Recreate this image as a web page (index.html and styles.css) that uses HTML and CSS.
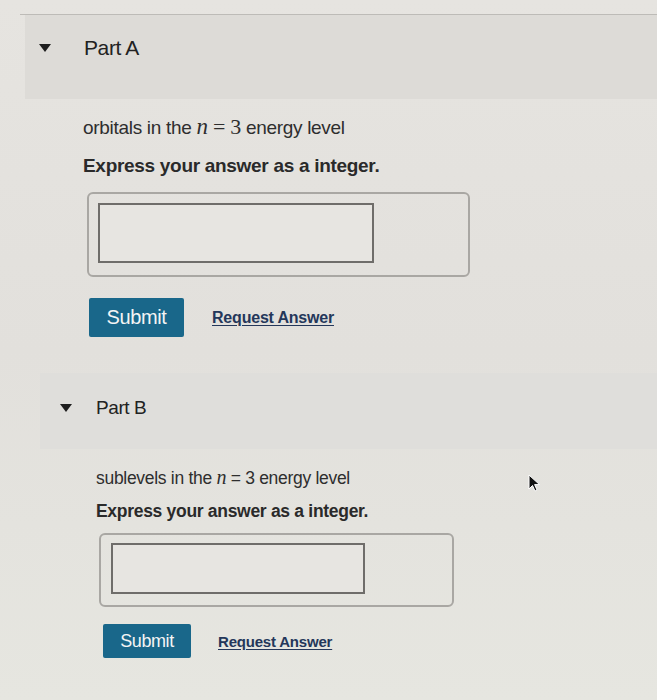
FILE: index.html
```html
<!DOCTYPE html>
<html>
<head>
<meta charset="utf-8">
<link rel="stylesheet" href="styles.css">
</head>
<body>
<div class="page">
  <section class="part part-a">
    <div class="part-head">
      <span class="tri"></span>
      <span class="part-title">Part A</span>
    </div>
    <div class="part-body">
      <p class="prompt">orbitals in the <span class="math"><i>n</i> = 3</span> energy level</p>
      <p class="instr">Express your answer as a integer.</p>
      <div class="answer-box"><div class="input"></div></div>
      <div class="actions">
        <button class="submit">Submit</button>
        <a class="req">Request Answer</a>
      </div>
    </div>
  </section>
  <section class="part part-b">
    <div class="part-head">
      <span class="tri"></span>
      <span class="part-title">Part B</span>
    </div>
    <div class="part-body">
      <p class="prompt"><span>sublevels in the </span><i class="nvar">n</i> = 3 energy level</p>
      <p class="instr">Express your answer as a integer.</p>
      <div class="answer-box"><div class="input"></div></div>
      <div class="actions">
        <button class="submit">Submit</button>
        <a class="req">Request Answer</a>
      </div>
    </div>
  </section>
  <svg class="cursor" width="14" height="18" viewBox="0 0 14 18"><path d="M1 1 L1 15 L4.5 11.5 L7 17 L9 16 L6.6 10.6 L11.5 10.6 Z" fill="#111" stroke="#fff" stroke-width="1"/></svg>
</div>
</body>
</html>
```
FILE: styles.css
```css
* { box-sizing: border-box; }
html, body { margin: 0; padding: 0; }
body {
  width: 657px;
  height: 700px;
  overflow: hidden;
  background: #e4e2de;
  font-family: "Liberation Sans", Arial, sans-serif;
  color: #2b2b2b;
}
.page {
  position: relative;
  padding-top: 14px;
  height: 700px;
  background: linear-gradient(180deg, #e6e4e0 0%, #e2e0dc 50%, #e6e6e0 100%);
}
.part-a {
  margin-left: 20px;
  border-top: 1px solid #bdbbb7;
}
.part-head {
  display: flex;
  align-items: center;
  background: #dddbd7;
}
.part-a .part-head {
  height: 84px;
  margin-left: 5px;
  padding-left: 14px;
  padding-bottom: 18px;
}
.tri {
  width: 0;
  height: 0;
  border-left: 6px solid transparent;
  border-right: 6px solid transparent;
  border-top: 8px solid #1e1e1e;
}
.part-title {
  font-size: 21px;
  color: #222;
  letter-spacing: -0.4px;
}
.part-a .part-title { margin-left: 33px; }
.part-body p { margin: 0; }
.part-a .part-body { padding-left: 63px; }
.prompt { font-size: 19px; color: #2e2e2e; letter-spacing: -0.3px; }
.part-a .prompt { margin-top: 15px !important; }
.math { font-family: "Liberation Serif", serif; font-size: 22px; }
.math i { font-size: 23px; }
.instr { font-weight: bold; font-size: 19px; color: #2a2a2a; letter-spacing: -0.3px; }
.part-a .instr { margin-top: 15px !important; }
.answer-box {
  border: 2px solid #a9a7a3;
  border-radius: 6px;
}
.part-a .answer-box {
  margin-top: 15px;
  margin-left: 4px;
  width: 383px;
  height: 85px;
  padding: 9px 0 0 9px;
}
.input {
  border: 2px solid #6f6d6a;
  background: #e7e5e1;
}
.part-a .input { width: 276px; height: 60px; }
.actions { display: flex; align-items: center; }
.part-a .actions { margin-top: 21px; margin-left: 6px; }
.submit {
  border: none;
  background: #19678a;
  color: #f4f4f4;
  font-family: "Liberation Sans", Arial, sans-serif;
  font-size: 20px;
  border-radius: 2px;
  letter-spacing: -0.4px;
  padding: 0;
}
.part-a .submit { width: 95px; height: 39px; }
.req {
  color: #24375a;
  font-weight: bold;
  text-decoration: underline;
  text-underline-offset: 2px;
  font-size: 16px;
  letter-spacing: -0.2px;
}
.part-a .req { margin-left: 28px; }

.part-b { margin-top: 36px; margin-left: 40px; }
.part-b .part-head {
  height: 76px;
  padding-left: 20px;
  padding-bottom: 6px;
  background: #dfdedb;
}
.part-b .part-title { font-size: 19px; margin-left: 24px; }
.part-b .part-body { padding-left: 56px; }
.part-b .prompt { font-size: 17.5px; margin-top: 17px !important; }
.nvar { font-family: "Liberation Serif", serif; font-size: 20px; }
.part-b .instr { font-size: 17.5px; margin-top: 12px !important; }
.part-b .answer-box {
  margin-top: 11px;
  margin-left: 3px;
  width: 355px;
  height: 74px;
  padding: 8px 0 0 10px;
}
.part-b .input { width: 254px; height: 51px; }
.part-b .actions { margin-top: 17px; margin-left: 7px; }
.part-b .submit { width: 88px; height: 34px; font-size: 18px; }
.part-b .req { margin-left: 27px; font-size: 15px; }
.cursor { position: absolute; left: 528px; top: 474px; }
```
